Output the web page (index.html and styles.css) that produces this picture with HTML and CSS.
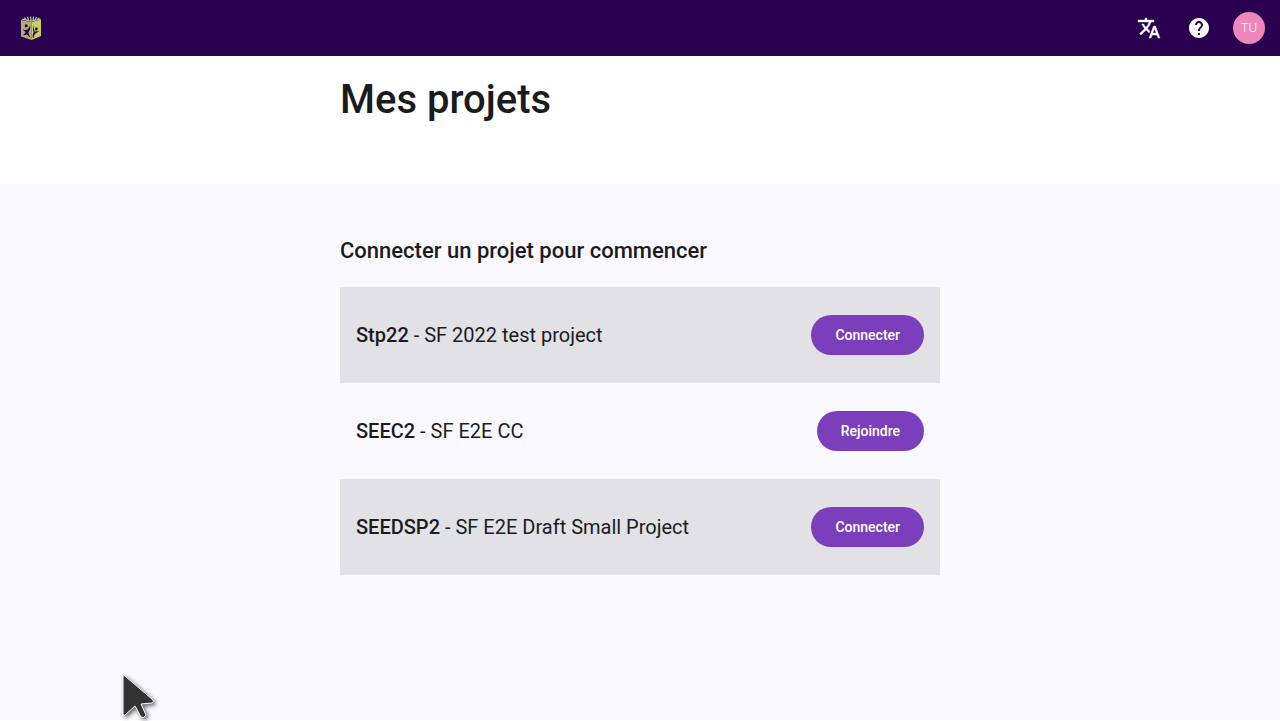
FILE: index.html
```html
<!DOCTYPE html>
<html lang="fr">
<head>
<meta charset="utf-8">
<meta name="viewport" content="width=device-width, initial-scale=1">
<title>Mes projets</title>
<link rel="stylesheet" href="styles.css">
</head>
<body>
<div class="app">
  <header class="topbar">
    <a class="home" href="#" aria-label="Accueil">
      <svg class="logo" viewBox="0 0 24 26" aria-hidden="true">
        <path fill="#aeae74" d="M1 5 11.500 7v18L1 21.500z"/>
        <path fill="#c4d068" d="M11.500 7 21 4.500v16.500l-9.500 4z"/>
        <path fill="none" stroke="#bcb98e" stroke-width="1.300" d="m2 4.200 9 2 9.500-2.200M4.500 2.500 6 5M7.500 1.800l1 3.500M10.500 1.500 11 5.500M13.500 1.500 13 5.500M16.500 2l-1.500 3M19 3l-2 2"/>
        <circle cx="6.200" cy="10.700" r="1.500" fill="#2b0050"/>
        <circle cx="16.300" cy="14" r="1.400" fill="#2b0050"/>
        <path fill="#2b0050" d="M2.800 13.500C4 15.500 6 15.300 7.800 14.200L10.300 10.500 10 14c-.5 1.700-1.500 2.500-1.600 3.800L10.500 23 7 19.500 3 20.500 5.800 17C4 16.300 3 15 2.800 13.500zM13.600 10c-.2 3 .2 5 1.400 6.400l4.500-.4-3.600 2.200c-1.500.8-2 3-2.200 5l-1-1.200c0-2.500.4-3.700 1-5C12.700 14.500 12.700 12 13.600 10z"/>
      </svg>
    </a>
    <nav class="tools" aria-label="Outils">
      <button class="tool" type="button" aria-label="Langue">
        <svg class="icon icon-bold" viewBox="0 0 24 24" aria-hidden="true"><path d="m12.870 15.070-2.540-2.510.030-.030A17.520 17.520 0 0 0 14.070 6H17V4h-7V2H8v2H1v1.990h11.170C11.500 7.920 10.440 9.750 9 11.350 8.070 10.320 7.300 9.190 6.690 8h-2c.730 1.630 1.730 3.170 2.980 4.560l-5.090 5.020L4 19l5-5 3.110 3.110zM18.500 10h-2L12 22h2l1.120-3h4.750L21 22h2zm-2.620 7 1.620-4.330L19.120 17z"/></svg>
      </button>
      <button class="tool" type="button" aria-label="Aide">
        <svg class="icon" viewBox="0 0 24 24" aria-hidden="true"><path d="M12 2C6.480 2 2 6.480 2 12s4.480 10 10 10 10-4.480 10-10S17.520 2 12 2m1 17h-2v-2h2zm2.070-7.750-.9.920C13.450 12.900 13 13.500 13 15h-2v-.5c0-1.100.45-2.100 1.170-2.830l1.240-1.260c.370-.360.590-.860.590-1.410 0-1.100-.9-2-2-2s-2 .9-2 2H8c0-2.210 1.790-4 4-4s4 1.790 4 4c0 .880-.360 1.680-.930 2.250"/></svg>
      </button>
      <button class="tool" type="button" aria-label="Compte TU"><span class="avatar">TU</span></button>
    </nav>
  </header>
  <div class="banner">
    <h1 class="title column">Mes projets</h1>
  </div>
  <main class="column content">
    <h2 class="subtitle">Connecter un projet pour commencer</h2>
    <ul class="projects">
      <li class="project"><span class="name"><strong class="code">Stp22</strong> - SF 2022 test project</span><button class="action" type="button">Connecter</button></li>
      <li class="project"><span class="name"><strong class="code">SEEC2</strong> - SF E2E CC</span><button class="action" type="button">Rejoindre</button></li>
      <li class="project"><span class="name"><strong class="code">SEEDSP2</strong> - SF E2E Draft Small Project</span><button class="action" type="button">Connecter</button></li>
    </ul>
  </main>
</div>
<svg class="pointer" viewBox="0 0 44 50" aria-hidden="true"><path d="M7 6q0-2 2-1l28 24q1 2-1 3l-11 1 5 11q-2 4-5 2l-6-11-10 9q-2 1-2-1z"/></svg>
</body>
</html>
```
FILE: styles.css
```css
* {
  box-sizing: border-box;
}

body {
  margin: 0;
  background: #fff;
  color: #1a1b1f;
  font-family: Roboto, "Liberation Sans", sans-serif;
}

.app {
  min-height: calc(100vh - 1px);
  background: #faf9ff;
}

.topbar {
  display: flex;
  align-items: center;
  justify-content: space-between;
  height: 56px;
  padding: 0 7px 0 20px;
  background: #2b0050;
}

.home {
  display: flex;
}

.logo {
  width: 24px;
  height: 26px;
}

.tools {
  display: flex;
  gap: 2px;
}

.tool {
  display: grid;
  place-items: center;
  width: 48px;
  height: 48px;
  padding: 0;
  border: 0;
  background: none;
  color: #fff;
  font: inherit;
}

.icon {
  width: 24px;
  height: 24px;
  fill: currentColor;
}

.icon-bold {
  stroke: currentColor;
  stroke-width: 0.4;
}

.avatar {
  width: 32px;
  height: 32px;
  border-radius: 50%;
  background: #ed87be;
  font-size: 13px;
  font-weight: 300;
  line-height: 31px;
  text-align: center;
}

.banner {
  height: 128px;
  padding: 18px 16px;
  background: #fff;
}

.column {
  width: 100%;
  max-width: 600px;
  margin: 0 auto;
}

.title {
  font-size: 40px;
  font-weight: 500;
  line-height: 52px;
}

.content {
  padding-top: 53px;
}

.subtitle {
  margin: 0 0 22px;
  font-size: 22px;
  font-weight: 500;
  line-height: 28px;
}

.projects {
  margin: 0;
  padding: 0;
  list-style: none;
}

.project {
  display: flex;
  align-items: center;
  justify-content: space-between;
  gap: 16px;
  min-height: 96px;
  padding: 16px;
}

.project:nth-child(odd) {
  background: #e2e2e6;
}

.name {
  font-size: 20px;
  line-height: 28px;
}

.code {
  font-weight: 500;
}

.action {
  height: 40px;
  padding: 0 24px;
  border: 0;
  border-radius: 20px;
  background: #7b3fbc;
  color: #fff;
  font: 500 14px/20px Roboto, "Liberation Sans", sans-serif;
}

.pointer {
  position: absolute;
  top: 671px;
  left: 116px;
  width: 44px;
  height: 50px;
  fill: #333;
  stroke: #fff;
  stroke-width: 1px;
  stroke-linejoin: round;
  filter: drop-shadow(2px 2px 2px #0009);
}
```
